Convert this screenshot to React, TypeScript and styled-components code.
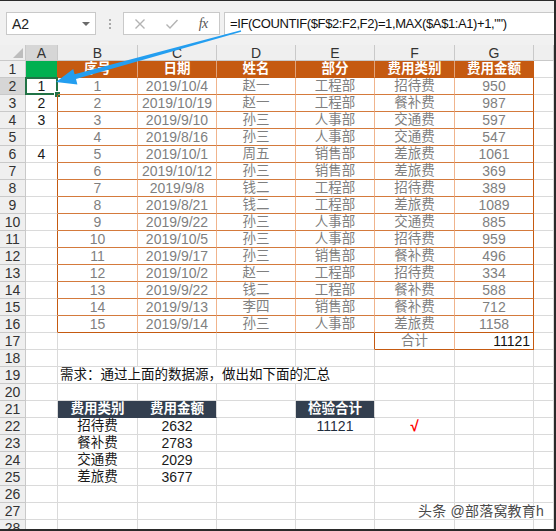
import React from 'react';
import styled, { createGlobalStyle } from 'styled-components';

const Global = createGlobalStyle`
  html, body { margin: 0; padding: 0; background: #ffffff; }
  body { font-family: "Liberation Sans", "Noto Sans CJK SC", sans-serif; }
`;

const GRID = '#dadada';
const HDR_LINE = '#c9c9c9';
const OR = '#c55a11';
const OR_L = '#f0b48c';
const OR_H = '#d47a3c';
const NAVY = '#333f4f';

const Frame = styled.div`
  position: relative;
  width: 556px;
  height: 531px;
  box-sizing: border-box;
  border-top: 1px solid #2a2a2a;
  border-right: 2px solid #2a2a2a;
  border-bottom: 2px solid #2a2a2a;
  overflow: hidden;
  background: #ffffff;
  display: flex;
  flex-direction: column;
`;

const TopBar = styled.div`
  flex: 0 0 44px;
  display: flex;
  align-items: flex-start;
  padding: 11px 0 0 6px;
  box-sizing: border-box;
  background: #f1f1f1;
`;

const NameBox = styled.div`
  width: 90px;
  height: 23px;
  box-sizing: border-box;
  border: 1px solid #c9c9c9;
  background: #ffffff;
  display: flex;
  align-items: center;
  justify-content: space-between;
  padding: 0 5px 0 5px;
  font-size: 14px;
  color: #222;
`;

const DropArrow = styled.span`
  width: 0;
  height: 0;
  border-left: 4px solid transparent;
  border-right: 4px solid transparent;
  border-top: 4px solid #6a6a6a;
`;

const Grip = styled.div`
  width: 27px;
  height: 23px;
  display: flex;
  flex-direction: column;
  align-items: center;
  justify-content: center;
  gap: 2px;
`;

const GripDot = styled.span`
  width: 2px;
  height: 2px;
  background: #a9a9a9;
`;

const FxBox = styled.div`
  width: 97px;
  height: 23px;
  box-sizing: border-box;
  border: 1px solid #c9c9c9;
  background: #ffffff;
  display: flex;
  align-items: center;
`;

const FxSlot = styled.div`
  width: 32px;
  height: 21px;
  display: flex;
  align-items: center;
  justify-content: center;
`;

const FxText = styled.span`
  font-family: "Liberation Serif", serif;
  font-style: italic;
  font-size: 14px;
  color: #555;
  letter-spacing: -0.5px;
`;

const FormulaBox = styled.div`
  flex: 1;
  margin-left: 4px;
  height: 23px;
  box-sizing: border-box;
  border: 1px solid #c9c9c9;
  border-right: none;
  background: #ffffff;
  display: flex;
  align-items: center;
  padding-left: 5px;
  font-size: 13px;
  letter-spacing: -0.4px;
  color: #111;
  white-space: nowrap;
`;

const Sheet = styled.div`
  flex: 1;
  display: grid;
  grid-template-columns: 26px 32px 80px 79px 79px 79px 80px 79px 1fr;
  grid-template-rows: 16px;
  grid-auto-rows: 17px;
  background: #ffffff;
`;

type Kind = 'corner' | 'colhdr' | 'rowhdr' | 'plain' | 'orange' | 'data' | 'navy' | 'green';

const bgFor = (k: Kind, active?: boolean) => {
  if (k === 'corner' || k === 'colhdr' || k === 'rowhdr') return active ? '#d6d6d6' : '#efefef';
  if (k === 'orange') return OR;
  if (k === 'navy') return NAVY;
  if (k === 'green') return '#00b050';
  return 'transparent';
};

const colorFor = (k: Kind) => {
  if (k === 'orange' || k === 'navy') return '#ffffff';
  if (k === 'data') return '#7f7f7f';
  if (k === 'colhdr' || k === 'rowhdr') return '#333';
  return '#1a1a1a';
};

const Cell = styled.div<{
  $kind: Kind;
  $align: 'flex-start' | 'center' | 'flex-end';
  $br: string;
  $bb: string;
  $span: number;
  $cjk: boolean;
  $color?: string;
  $active?: boolean;
  $pad: number;
}>`
  position: relative;
  grid-column: span ${(p) => p.$span};
  box-sizing: border-box;
  border-right: 1px solid ${(p) => p.$br};
  border-bottom: 1px solid ${(p) => p.$bb};
  background: ${(p) => bgFor(p.$kind, p.$active)};
  color: ${(p) => p.$color || colorFor(p.$kind)};
  font-size: ${(p) => (p.$cjk ? '13.5px' : '14px')};
  font-weight: ${(p) => (p.$kind === 'orange' || p.$kind === 'navy' ? 700 : 400)};
  line-height: 16px;
  display: flex;
  align-items: center;
  justify-content: ${(p) => p.$align};
  padding: 0 ${(p) => p.$pad}px;
  white-space: nowrap;
  overflow: visible;
`;

const CornerTri = styled.span`
  align-self: flex-end;
  margin: 0 2px 2px auto;
  width: 0;
  height: 0;
  border-left: 10px solid transparent;
  border-bottom: 10px solid #bdbdbd;
`;

const Selection = styled.div`
  position: absolute;
  left: -1px;
  top: -1px;
  right: -1px;
  bottom: -1px;
  border: 2px solid #217346;
  pointer-events: none;
  &::after {
    content: '';
    position: absolute;
    right: -5px;
    bottom: -5px;
    width: 5px;
    height: 5px;
    background: #217346;
    border: 1px solid #ffffff;
  }
`;

const CheckMark = styled.span`
  color: #ff0000;
  font-weight: 700;
  font-size: 15px;
`;

const Watermark = styled.div`
  position: absolute;
  right: 10px;
  bottom: 9px;
  font-size: 14px;
  color: #4a4a4a;
  text-shadow: 0 0 2px #ffffff, 0 0 1px #ffffff;
  letter-spacing: 0.2px;
`;

const ArrowLayer = styled.svg`
  position: absolute;
  left: 0;
  top: -1px;
  pointer-events: none;
`;

const data: string[][] = [
  ['1', '2019/10/4', '赵一', '工程部', '招待费', '950'],
  ['2', '2019/10/19', '赵一', '工程部', '餐补费', '987'],
  ['3', '2019/9/10', '孙三', '人事部', '交通费', '597'],
  ['4', '2019/8/16', '孙三', '人事部', '交通费', '547'],
  ['5', '2019/10/1', '周五', '销售部', '差旅费', '1061'],
  ['6', '2019/10/12', '孙三', '销售部', '差旅费', '369'],
  ['7', '2019/9/8', '钱二', '工程部', '招待费', '389'],
  ['8', '2019/8/21', '钱二', '工程部', '差旅费', '1089'],
  ['9', '2019/9/22', '孙三', '人事部', '交通费', '885'],
  ['10', '2019/10/5', '孙三', '人事部', '招待费', '959'],
  ['11', '2019/9/17', '孙三', '销售部', '餐补费', '496'],
  ['12', '2019/10/2', '赵一', '工程部', '招待费', '334'],
  ['13', '2019/9/22', '钱二', '工程部', '餐补费', '588'],
  ['14', '2019/9/13', '李四', '销售部', '餐补费', '712'],
  ['15', '2019/9/14', '孙三', '人事部', '差旅费', '1158'],
];

const headers = ['序号', '日期', '姓名', '部分', '费用类别', '费用金额'];
const colA: Record<number, string> = { 2: '1', 3: '2', 4: '3', 6: '4' };
const summary: [string, string][] = [
  ['招待费', '2632'],
  ['餐补费', '2783'],
  ['交通费', '2029'],
  ['差旅费', '3677'],
];
const letters = ['A', 'B', 'C', 'D', 'E', 'F', 'G', ''];

interface Spec {
  key: string;
  text?: React.ReactNode;
  kind: Kind;
  align?: 'flex-start' | 'center' | 'flex-end';
  cjk?: boolean;
  br?: string;
  bb?: string;
  span?: number;
  sel?: boolean;
  color?: string;
  active?: boolean;
  pad?: number;
  corner?: boolean;
}

const isCjk = (s?: string) => !!s && /[\u4e00-\u9fff]/.test(s);

function buildCells(): Spec[] {
  const out: Spec[] = [];
  // column header row
  out.push({ key: 'corner', kind: 'corner', br: HDR_LINE, bb: HDR_LINE, corner: true });
  letters.forEach((l, i) => {
    out.push({ key: 'h' + i, kind: 'colhdr', text: l, br: HDR_LINE, bb: HDR_LINE, active: i === 0 });
  });
  for (let r = 1; r <= 28; r++) {
    out.push({ key: `r${r}`, kind: 'rowhdr', text: String(r), br: HDR_LINE, bb: HDR_LINE, active: r === 2 });
    for (let c = 1; c <= 8; c++) {
      const key = `c${r}-${c}`;
      const s: Spec = { key, kind: 'plain', br: GRID, bb: GRID };
      if (r >= 1 && r <= 16) {
        if (c === 1) {
          s.br = OR;
          if (r === 1) s.kind = 'green';
          if (colA[r]) s.text = colA[r];
          if (r === 2) s.sel = true;
        } else if (c >= 2 && c <= 7) {
          s.kind = r === 1 ? 'orange' : 'data';
          s.text = r === 1 ? headers[c - 2] : data[r - 2][c - 2];
          s.br = c === 7 ? OR : r === 1 ? '#e0a47c' : OR_L;
          s.bb = r === 1 || r === 16 ? OR : OR_H;
        }
      } else if (r === 17) {
        if (c === 5) s.br = OR;
        if (c === 6) {
          s.kind = 'data';
          s.text = '合计';
          s.br = OR_L;
          s.bb = OR;
        }
        if (c === 7) {
          s.text = '11121';
          s.align = 'flex-end';
          s.color = '#111';
          s.br = OR;
          s.bb = OR;
          s.pad = 3;
        }
      } else if (r === 19) {
        if (c === 2) {
          s.text = '需求：通过上面的数据源，做出如下面的汇总';
          s.span = 4;
          s.align = 'flex-start';
          s.pad = 2;
          s.color = '#111';
        }
        if (c >= 3 && c <= 5) continue;
      } else if (r === 21) {
        if (c === 2) {
          s.kind = 'navy';
          s.text = '费用类别';
          s.br = NAVY;
          s.bb = NAVY;
        }
        if (c === 3) {
          s.kind = 'navy';
          s.text = '费用金额';
          s.bb = NAVY;
        }
        if (c === 5) {
          s.kind = 'navy';
          s.text = '检验合计';
          s.bb = NAVY;
        }
      } else if (r >= 22 && r <= 25) {
        const row = summary[r - 22];
        if (c === 2) s.text = row[0];
        if (c === 3) s.text = row[1];
        if (r === 22 && c === 5) {
          s.text = '11121';
          s.color = '#1f2d3d';
        }
        if (r === 22 && c === 6) s.text = <CheckMark>√</CheckMark>;
      }
      out.push(s);
    }
  }
  return out;
}

const cells = buildCells();

const XIcon = () => (
  <svg width="12" height="12" viewBox="0 0 12 12">
    <path d="M1.5 1.5 L10.5 10.5 M10.5 1.5 L1.5 10.5" stroke="#b3b3b3" strokeWidth="1.4" fill="none" />
  </svg>
);

const CheckIcon = () => (
  <svg width="14" height="12" viewBox="0 0 14 12">
    <path d="M1.5 6.5 L5 10 L12.5 2" stroke="#b3b3b3" strokeWidth="1.4" fill="none" />
  </svg>
);

export default function App() {
  return (
    <>
      <Global />
      <Frame>
        <TopBar>
          <NameBox>
            <span>A2</span>
            <DropArrow />
          </NameBox>
          <Grip>
            <GripDot />
            <GripDot />
            <GripDot />
          </Grip>
          <FxBox>
            <FxSlot>
              <XIcon />
            </FxSlot>
            <FxSlot>
              <CheckIcon />
            </FxSlot>
            <FxSlot>
              <FxText>fx</FxText>
            </FxSlot>
          </FxBox>
          <FormulaBox>=IF(COUNTIF($F$2:F2,F2)=1,MAX($A$1:A1)+1,"")</FormulaBox>
        </TopBar>
        <Sheet>
          {cells.map((s) => {
            const txt = typeof s.text === 'string' ? s.text : undefined;
            return (
              <Cell
                key={s.key}
                $kind={s.kind}
                $align={s.align || 'center'}
                $br={s.br || GRID}
                $bb={s.bb || GRID}
                $span={s.span || 1}
                $cjk={isCjk(txt)}
                $color={s.color}
                $active={s.active}
                $pad={s.pad ?? 0}
              >
                {s.corner ? <CornerTri /> : s.text}
                {s.sel && <Selection />}
              </Cell>
            );
          })}
        </Sheet>
        <ArrowLayer width="556" height="531" viewBox="0 0 556 531">
          <polygon
            points="240.8,30.2 241.2,31.8 76.0,79.1 77.4,84.4 56,82 73.2,69.0 74.6,74.3"
            fill="#239ef0"
          />
        </ArrowLayer>
        <Watermark>头条 @部落窝教育h</Watermark>
      </Frame>
    </>
  );
}
